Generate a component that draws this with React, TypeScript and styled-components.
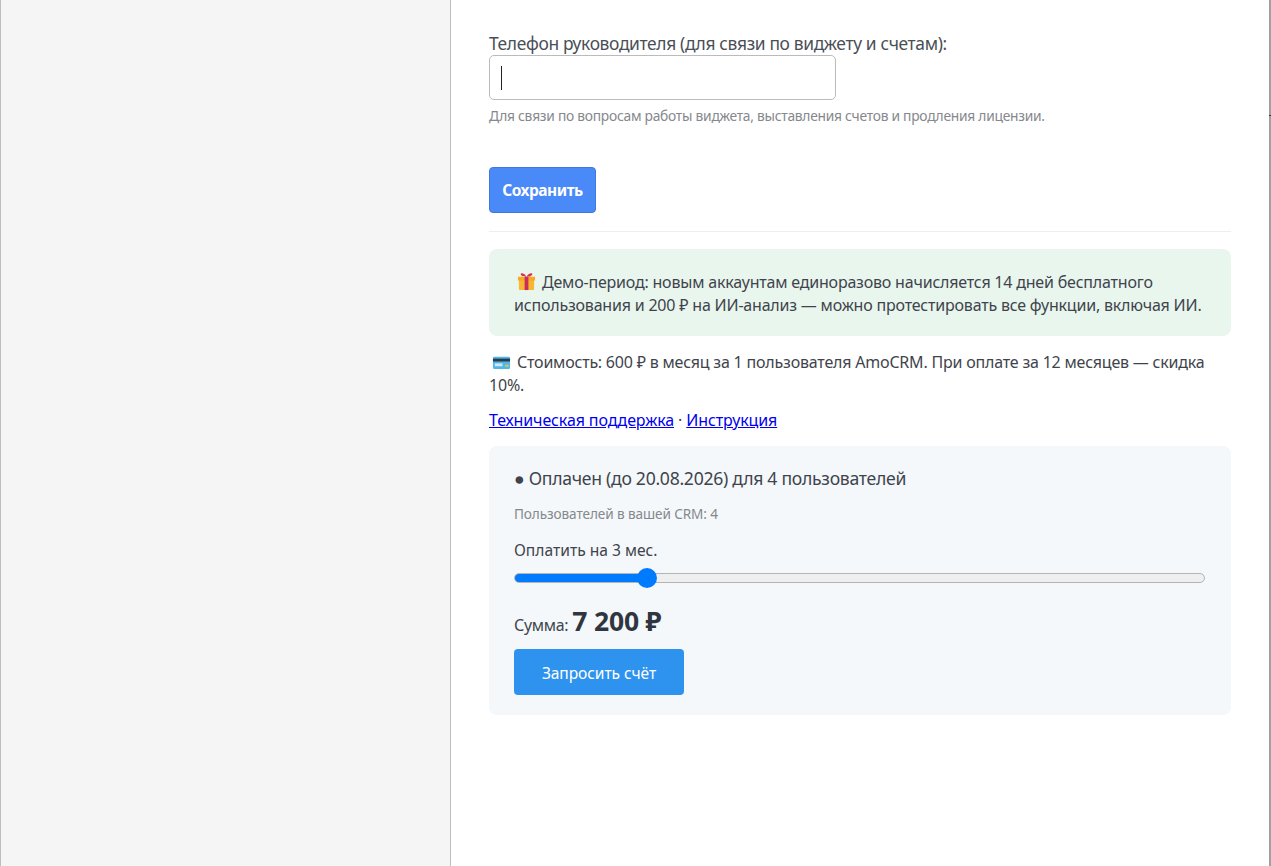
import React, { useState, ChangeEvent } from 'react';
import styled, { createGlobalStyle } from 'styled-components';

const FONT = `"Noto Sans", "Open Sans", sans-serif`;

const GlobalStyle = createGlobalStyle`
	html, body {
		margin: 0;
		padding: 0;
		height: 100%;
		overflow: hidden;
		background: #fff;
	}
`;

const Layout = styled.div`
	display: flex;
	height: 100vh;
	font-family: ${FONT};
	color: #3f444c;
`;

const Sidebar = styled.aside`
	box-sizing: border-box;
	flex: 0 0 451px;
	background: #f5f5f5;
	border-left: 1px solid #bdbdbd;
	border-right: 1px solid #bdbdbd;
`;

const Content = styled.main`
	box-sizing: border-box;
	flex: 1 0 0;
	padding: 32px 38px 0;
	background: #fff;
	border-right: 2px solid #a0a0a0;
`;

const Label = styled.label`
	display: block;
	font-size: 17.4px;
	line-height: 23px;
	letter-spacing: -0.35px;
	color: #4a4f57;
`;

const Caret = styled.span`
	display: block;
	width: 1px;
	height: 24px;
	background: #222;
`;

const PhoneBox = styled.div`
	box-sizing: border-box;
	display: flex;
	align-items: center;
	width: 347px;
	height: 45px;
	padding: 0 11px;
	border: 1px solid #bbb;
	border-radius: 5px;
	background: #fff;
`;

const Hint = styled.p`
	margin: 7px 0 0;
	font-size: 13.8px;
	line-height: 18px;
	letter-spacing: -0.26px;
	color: #85888c;
`;

const SaveButton = styled.button`
	display: block;
	box-sizing: border-box;
	width: 107px;
	height: 46px;
	margin-top: 42px;
	padding: 0;
	background: #4a89f8;
	border: 1px solid #3f78dc;
	border-radius: 4px;
	color: #fff;
	font-family: ${FONT};
	font-size: 15.5px;
	font-weight: 700;
	letter-spacing: -0.5px;
`;

const Divider = styled.hr`
	margin: 18px 0 17px;
	border: 0;
	border-top: 1px solid #eeeeee;
`;

const DemoNote = styled.div`
	box-sizing: border-box;
	height: 87px;
	padding: 22px 25px 0;
	background: #e9f6ee;
	border-radius: 8px;
	font-size: 16px;
	line-height: 23px;
	letter-spacing: -0.2px;
`;

const Emoji = styled.svg`
	display: inline-block;
	width: 19px;
	height: 19px;
	margin: 0 2px 0 3px;
	vertical-align: -3px;
`;

const Paragraph = styled.p`
	margin: 15px 0 0;
	font-size: 16px;
	line-height: 23px;
	letter-spacing: -0.2px;
`;

const Links = styled(Paragraph)`
	margin-top: 12px;
	letter-spacing: -0.12px;
`;

const Link = styled.a`
	color: #0000ee;
	text-decoration: underline;
`;

const BillingCard = styled.section`
	box-sizing: border-box;
	height: 269px;
	margin-top: 14px;
	padding: 20px 25px 0;
	background: #f4f8fb;
	border-radius: 8px;
`;

const Status = styled.div`
	font-size: 17.6px;
	line-height: 24px;
	letter-spacing: -0.28px;
`;

const UsersCount = styled.div`
	margin-top: 15px;
	font-size: 13.6px;
	line-height: 18px;
	letter-spacing: -0.1px;
	color: #85888c;
`;

const PeriodLabel = styled.div`
	margin-top: 16px;
	font-size: 15.6px;
	line-height: 22px;
`;

const Slider = styled.input<{ $fill: number }>`
	display: block;
	width: 691px;
	height: 20px;
	margin: 7px 0 0;
	padding: 0;
	appearance: none;
	background: transparent;
	outline: none;

	&::-webkit-slider-runnable-track {
		box-sizing: border-box;
		height: 10px;
		border: 1px solid #b4b4b4;
		border-radius: 5px;
		background: linear-gradient(
			to right,
			#007bff ${(p) => p.$fill}%,
			#efefef ${(p) => p.$fill}%
		);
	}

	&::-webkit-slider-thumb {
		appearance: none;
		width: 20px;
		height: 20px;
		margin-top: -6px;
		border: 0;
		border-radius: 50%;
		background: #007bff;
	}
`;

const SumRow = styled.div`
	display: flex;
	align-items: baseline;
	gap: 4px;
	margin-top: 15px;
	font-size: 16px;
	line-height: 36px;
	letter-spacing: -0.3px;
`;

const SumValue = styled.strong`
	font-size: 26.5px;
	font-weight: 700;
	letter-spacing: -0.2px;
	color: #2f3640;
`;

const RequestButton = styled.button`
	display: block;
	width: 170px;
	height: 46px;
	margin-top: 6px;
	padding: 1px 0 0;
	background: #2e93ee;
	border: 0;
	border-radius: 4px;
	color: #fff;
	font-family: ${FONT};
	font-size: 15.6px;
	letter-spacing: -0.1px;
`;

const ScrollMark = styled.span`
	position: fixed;
	top: 115px;
	right: 0;
	width: 2px;
	height: 1px;
	background: #333;
`;

const GiftIcon = () => (
	<Emoji viewBox="0 0 20 20">
		<rect x="2" y="6" width="16" height="13" rx="1" fill="#f7b733" />
		<rect x="1" y="5" width="18" height="4" fill="#f9a825" />
		<rect x="8" y="5" width="4" height="14" fill="#c62f5b" />
		<path d="M10 5 C7 0 3 1 4 3 C5 5 8 5 10 5 C12 5 15 5 16 3 C17 1 13 0 10 5Z" fill="#d8324f" />
	</Emoji>
);

const CardIcon = () => (
	<Emoji viewBox="0 0 20 20">
		<rect x="1" y="5" width="18" height="13" rx="1.5" fill="#4fb8e8" />
		<rect x="1" y="7" width="18" height="3" fill="#2b3a4a" />
		<rect x="3" y="12" width="8" height="3" fill="#cfe8f3" />
		<rect x="14" y="13.5" width="3.5" height="2" fill="#f0c040" />
	</Emoji>
);

function App() {
	const [months, setMonths] = useState(3);

	const monthsChanged = (e: ChangeEvent<HTMLInputElement>) => {
		setMonths(Number(e.target.value));
	};

	// thumb is 20px wide, so the fill ends at its centre and not at value/max
	const fill = ((10 + ((months - 1) / 11) * 671) / 691) * 100;
	const total = (months * 4 * 600).toLocaleString('ru-RU').replace(/\s/g, ' ');

	return (
		<Layout>
			<GlobalStyle />
			<Sidebar />
			<Content>
				<Label>Телефон руководителя (для связи по виджету и счетам):</Label>
				<PhoneBox>
					<Caret />
				</PhoneBox>
				<Hint>Для связи по вопросам работы виджета, выставления счетов и продления лицензии.</Hint>
				<SaveButton>Сохранить</SaveButton>
				<Divider />
				<DemoNote>
					<GiftIcon /> Демо-период: новым аккаунтам единоразово начисляется 14 дней бесплатного
					использования и 200 ₽ на ИИ-анализ — можно протестировать все функции, включая ИИ.
				</DemoNote>
				<Paragraph>
					<CardIcon /> Стоимость: 600 ₽ в месяц за 1 пользователя AmoCRM. При оплате за 12 месяцев — скидка 10%.
				</Paragraph>
				<Links>
					<Link href="#">Техническая поддержка</Link> · <Link href="#">Инструкция</Link>
				</Links>
				<BillingCard>
					<Status>● Оплачен (до 20.08.2026) для 4 пользователей</Status>
					<UsersCount>Пользователей в вашей CRM: 4</UsersCount>
					<PeriodLabel>Оплатить на {months} мес.</PeriodLabel>
					<Slider type="range" min={1} max={12} value={months} onChange={monthsChanged} $fill={fill} />
					<SumRow>
						Сумма: <SumValue>{total} ₽</SumValue>
					</SumRow>
					<RequestButton>Запросить счёт</RequestButton>
				</BillingCard>
			</Content>
			<ScrollMark />
		</Layout>
	);
}

export default App;
